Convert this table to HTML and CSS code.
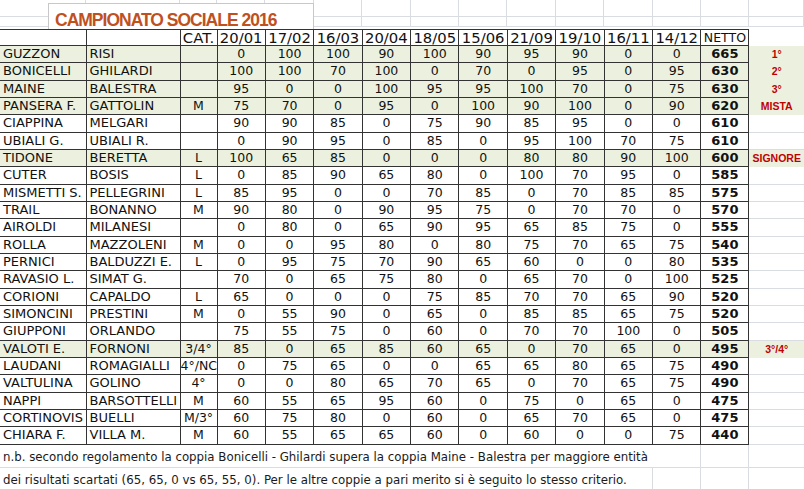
FILE: index.html
```html
<!DOCTYPE html>
<html lang="it">
<head>
<meta charset="utf-8">
<title>Campionato Sociale 2016</title>
<link rel="stylesheet" href="styles.css">
</head>
<body>
<div class="sheet">
  <div class="top">
    <div></div><div></div><div></div><div></div><div></div><div></div><div></div><div></div><div></div><div></div><div></div><div></div><div></div><div></div><div></div>
    <div></div><div></div><div></div><div></div><div></div><div></div><div></div><div></div><div></div><div></div><div></div><div></div><div></div><div></div><div></div>
  </div>
  <div class="title">CAMPIONATO SOCIALE 2016</div>
  <table class="grid">
    <colgroup>
      <col class="c-a"><col class="c-b"><col class="c-cat">
      <col class="c-d"><col class="c-d"><col class="c-d"><col class="c-d"><col class="c-d">
      <col class="c-d"><col class="c-d"><col class="c-d"><col class="c-d"><col class="c-d">
      <col class="c-net"><col class="c-x">
    </colgroup>
    <thead>
      <tr class="head"><th></th><th></th><th>CAT.</th><th>20/01</th><th>17/02</th><th>16/03</th><th>20/04</th><th>18/05</th><th>15/06</th><th>21/09</th><th>19/10</th><th>16/11</th><th>14/12</th><th class="nh">NETTO</th><th class="x"></th></tr>
    </thead>
    <tbody>
      <tr class="hl"><td class="n">GUZZON</td><td class="n">RISI</td><td></td><td>0</td><td>100</td><td>100</td><td>90</td><td>100</td><td>90</td><td>95</td><td>90</td><td>0</td><td>0</td><td class="net">665</td><td class="x">1°</td></tr>
      <tr class="hl"><td class="n">BONICELLI</td><td class="n">GHILARDI</td><td></td><td>100</td><td>100</td><td>70</td><td>100</td><td>0</td><td>70</td><td>0</td><td>95</td><td>0</td><td>95</td><td class="net">630</td><td class="x">2°</td></tr>
      <tr class="hl"><td class="n">MAINE</td><td class="n">BALESTRA</td><td></td><td>95</td><td>0</td><td>0</td><td>100</td><td>95</td><td>95</td><td>100</td><td>70</td><td>0</td><td>75</td><td class="net">630</td><td class="x">3°</td></tr>
      <tr class="hl"><td class="n">PANSERA F.</td><td class="n">GATTOLIN</td><td>M</td><td>75</td><td>70</td><td>0</td><td>95</td><td>0</td><td>100</td><td>90</td><td>100</td><td>0</td><td>90</td><td class="net">620</td><td class="x">MISTA</td></tr>
      <tr><td class="n">CIAPPINA</td><td class="n">MELGARI</td><td></td><td>90</td><td>90</td><td>85</td><td>0</td><td>75</td><td>90</td><td>85</td><td>95</td><td>0</td><td>0</td><td class="net">610</td><td class="x"></td></tr>
      <tr><td class="n">UBIALI G.</td><td class="n">UBIALI R.</td><td></td><td>0</td><td>90</td><td>95</td><td>0</td><td>85</td><td>0</td><td>95</td><td>100</td><td>70</td><td>75</td><td class="net">610</td><td class="x"></td></tr>
      <tr class="hl"><td class="n">TIDONE</td><td class="n">BERETTA</td><td>L</td><td>100</td><td>65</td><td>85</td><td>0</td><td>0</td><td>0</td><td>80</td><td>80</td><td>90</td><td>100</td><td class="net">600</td><td class="x">SIGNORE</td></tr>
      <tr><td class="n">CUTER</td><td class="n">BOSIS</td><td>L</td><td>0</td><td>85</td><td>90</td><td>65</td><td>80</td><td>0</td><td>100</td><td>70</td><td>95</td><td>0</td><td class="net">585</td><td class="x"></td></tr>
      <tr><td class="n">MISMETTI S.</td><td class="n">PELLEGRINI</td><td>L</td><td>85</td><td>95</td><td>0</td><td>0</td><td>70</td><td>85</td><td>0</td><td>70</td><td>85</td><td>85</td><td class="net">575</td><td class="x"></td></tr>
      <tr><td class="n">TRAIL</td><td class="n">BONANNO</td><td>M</td><td>90</td><td>80</td><td>0</td><td>90</td><td>95</td><td>75</td><td>0</td><td>70</td><td>70</td><td>0</td><td class="net">570</td><td class="x"></td></tr>
      <tr><td class="n">AIROLDI</td><td class="n">MILANESI</td><td></td><td>0</td><td>80</td><td>0</td><td>65</td><td>90</td><td>95</td><td>65</td><td>85</td><td>75</td><td>0</td><td class="net">555</td><td class="x"></td></tr>
      <tr><td class="n">ROLLA</td><td class="n">MAZZOLENI</td><td>M</td><td>0</td><td>0</td><td>95</td><td>80</td><td>0</td><td>80</td><td>75</td><td>70</td><td>65</td><td>75</td><td class="net">540</td><td class="x"></td></tr>
      <tr><td class="n">PERNICI</td><td class="n">BALDUZZI E.</td><td>L</td><td>0</td><td>95</td><td>75</td><td>70</td><td>90</td><td>65</td><td>60</td><td>0</td><td>0</td><td>80</td><td class="net">535</td><td class="x"></td></tr>
      <tr><td class="n">RAVASIO L.</td><td class="n">SIMAT G.</td><td></td><td>70</td><td>0</td><td>65</td><td>75</td><td>80</td><td>0</td><td>65</td><td>70</td><td>0</td><td>100</td><td class="net">525</td><td class="x"></td></tr>
      <tr><td class="n">CORIONI</td><td class="n">CAPALDO</td><td>L</td><td>65</td><td>0</td><td>0</td><td>0</td><td>75</td><td>85</td><td>70</td><td>70</td><td>65</td><td>90</td><td class="net">520</td><td class="x"></td></tr>
      <tr><td class="n">SIMONCINI</td><td class="n">PRESTINI</td><td>M</td><td>0</td><td>55</td><td>90</td><td>0</td><td>65</td><td>0</td><td>85</td><td>85</td><td>65</td><td>75</td><td class="net">520</td><td class="x"></td></tr>
      <tr><td class="n">GIUPPONI</td><td class="n">ORLANDO</td><td></td><td>75</td><td>55</td><td>75</td><td>0</td><td>60</td><td>0</td><td>70</td><td>70</td><td>100</td><td>0</td><td class="net">505</td><td class="x"></td></tr>
      <tr class="hl"><td class="n">VALOTI E.</td><td class="n">FORNONI</td><td>3/4°</td><td>85</td><td>0</td><td>65</td><td>85</td><td>60</td><td>65</td><td>0</td><td>70</td><td>65</td><td>0</td><td class="net">495</td><td class="x">3°/4°</td></tr>
      <tr><td class="n">LAUDANI</td><td class="n">ROMAGIALLI</td><td>4°/NC</td><td>0</td><td>75</td><td>65</td><td>0</td><td>0</td><td>65</td><td>65</td><td>80</td><td>65</td><td>75</td><td class="net">490</td><td class="x"></td></tr>
      <tr><td class="n">VALTULINA</td><td class="n">GOLINO</td><td>4°</td><td>0</td><td>0</td><td>80</td><td>65</td><td>70</td><td>65</td><td>0</td><td>70</td><td>65</td><td>75</td><td class="net">490</td><td class="x"></td></tr>
      <tr><td class="n">NAPPI</td><td class="n">BARSOTTELLI</td><td>M</td><td>60</td><td>55</td><td>65</td><td>95</td><td>60</td><td>0</td><td>75</td><td>0</td><td>65</td><td>0</td><td class="net">475</td><td class="x"></td></tr>
      <tr><td class="n">CORTINOVIS</td><td class="n">BUELLI</td><td>M/3°</td><td>60</td><td>75</td><td>80</td><td>0</td><td>60</td><td>0</td><td>65</td><td>70</td><td>65</td><td>0</td><td class="net">475</td><td class="x"></td></tr>
      <tr><td class="n">CHIARA F.</td><td class="n">VILLA M.</td><td>M</td><td>60</td><td>55</td><td>65</td><td>65</td><td>60</td><td>0</td><td>60</td><td>0</td><td>0</td><td>75</td><td class="net">440</td><td class="x"></td></tr>
      <tr class="note"><td class="nt" colspan="13">n.b. secondo regolamento la coppia Bonicelli - Ghilardi supera la coppia Maine - Balestra per maggiore entità</td><td class="g"></td><td class="g"></td></tr>
      <tr class="note"><td class="nt" colspan="12">dei risultati scartati (65, 65, 0 vs 65, 55, 0). Per le altre coppie a pari merito si è seguito lo stesso criterio.</td><td class="g"></td><td class="g"></td><td class="g"></td></tr>
    </tbody>
  </table>
</div>
</body>
</html>
```

FILE: styles.css
```css
html, body {
  margin: 0;
  padding: 0;
  background: #ffffff;
}

body {
  width: 804px;
  height: 489px;
  overflow: hidden;
  font-family: "DejaVu Sans", Verdana, sans-serif;
  color: #111111;
}

.sheet {
  position: relative;
  width: 804px;
}

.top {
  display: grid;
  grid-template-columns: 86px 94px 37px repeat(10, 48.4px) 48px 55px;
  grid-template-rows: 17px 10px;
  height: 29px;
}

.top div {
  box-sizing: border-box;
  border-right: 1px solid #d9dde2;
  border-bottom: 1px solid #d9dde2;
}

.title {
  position: absolute;
  left: 48px;
  top: 3px;
  width: 266px;
  height: 26px;
  box-sizing: border-box;
  background: #ffffff;
  border: 1px solid #c8c8c8;
  border-bottom: none;
  padding: 7px 0 0 6px;
  font-family: "Liberation Sans", Arial, sans-serif;
  font-weight: bold;
  font-size: 17.5px;
  line-height: 18px;
  letter-spacing: -1px;
  color: #c0511f;
  white-space: nowrap;
  overflow: hidden;
}

.grid {
  border-collapse: collapse;
  table-layout: fixed;
  width: 804px;
}

.c-a { width: 86px; }
.c-b { width: 94px; }
.c-cat { width: 37px; }
.c-d { width: 48.4px; }
.c-net { width: 48px; }
.c-x { width: 55px; }

.grid th,
.grid td {
  padding: 0;
  border: 1px solid #333333;
  text-align: center;
  vertical-align: middle;
  white-space: nowrap;
  overflow: hidden;
  font-weight: normal;
  font-size: 12.5px;
  line-height: 14px;
}

.grid th:first-child,
.grid td:first-child {
  border-left: none;
}

.head {
  height: 16px;
}

.head th {
  font-size: 14.8px;
  line-height: 15px;
}

.head th.nh {
  font-size: 12.5px;
}

.grid tbody tr {
  height: 17.33px;
}

.grid td.n {
  text-align: left;
  padding-left: 3px;
  font-size: 13px;
}

.grid tr.hl td {
  background: #ebf1de;
}

.grid td.net {
  font-weight: bold;
  font-size: 13px;
}

.grid .x {
  border-top: none;
  border-right: none;
  border-bottom: 1px solid #d9dde2;
  color: #c00000;
  font-family: "Liberation Sans", Arial, sans-serif;
  font-weight: bold;
  font-size: 10.5px;
}

.grid .head .x {
  border-bottom: none;
}

.grid tr.hl .x {
  border-bottom: 1px solid #ebf1de;
}

.grid tr.note {
  height: 23px;
}

.grid td.nt {
  border: none;
  border-bottom: 1px solid #d9dde2;
  text-align: left;
  vertical-align: bottom;
  padding: 0 0 3px 3px;
  font-size: 11.8px;
  line-height: 14px;
  color: #1a1a1a;
  overflow: visible;
}

.grid td.g {
  border: none;
  border-left: 1px solid #d9dde2;
  border-bottom: 1px solid #d9dde2;
}
```
